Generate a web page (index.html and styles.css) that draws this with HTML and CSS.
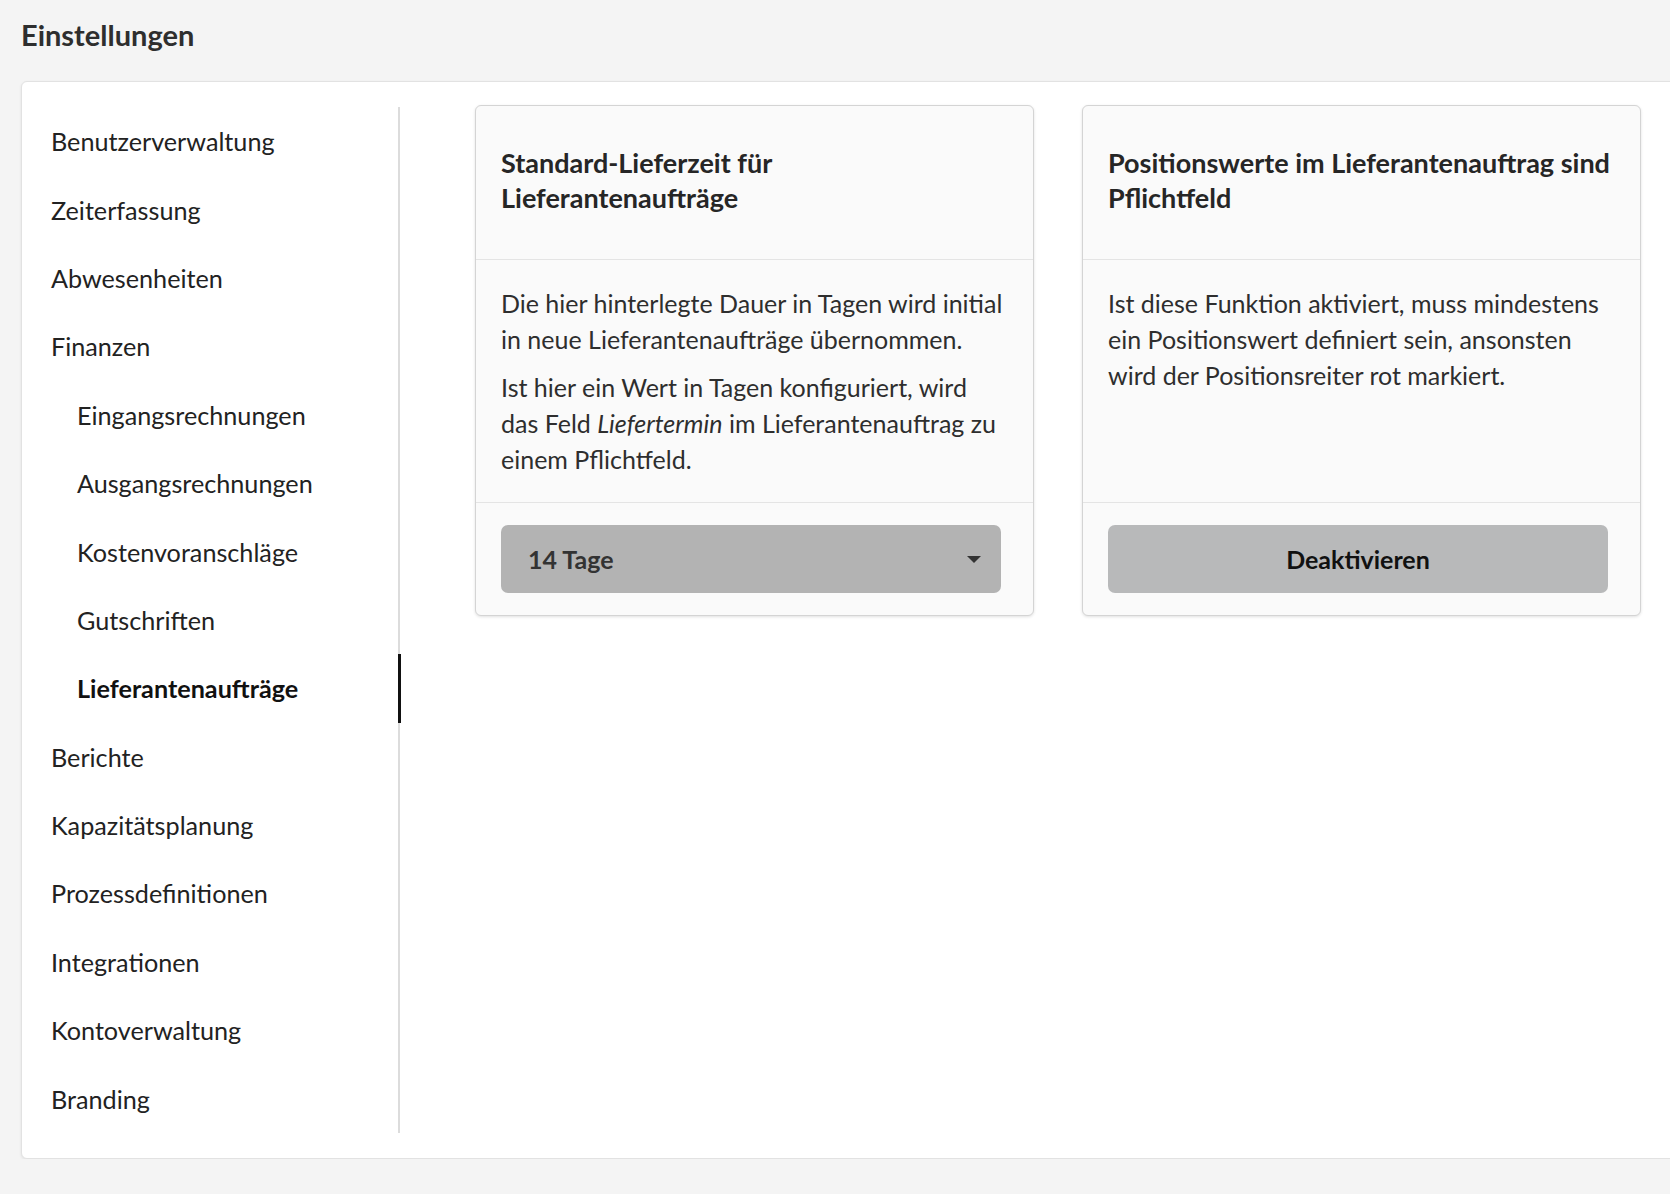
FILE: index.html
```html
<!DOCTYPE html>
<html lang="de">
<head>
  <meta charset="UTF-8">
  <meta name="viewport" content="width=device-width, initial-scale=1.0">
  <title>Einstellungen</title>
  <link rel="stylesheet" href="styles.css">
</head>
<body>
  <h1 class="page-title">Einstellungen</h1>

  <div class="panel">
    <nav class="side-nav">
      <a class="nav-item">Benutzerverwaltung</a>
      <a class="nav-item">Zeiterfassung</a>
      <a class="nav-item">Abwesenheiten</a>
      <a class="nav-item">Finanzen</a>
      <a class="nav-item sub">Eingangsrechnungen</a>
      <a class="nav-item sub">Ausgangsrechnungen</a>
      <a class="nav-item sub">Kostenvoranschläge</a>
      <a class="nav-item sub">Gutschriften</a>
      <a class="nav-item sub active">Lieferantenaufträge</a>
      <a class="nav-item">Berichte</a>
      <a class="nav-item">Kapazitätsplanung</a>
      <a class="nav-item">Prozessdefinitionen</a>
      <a class="nav-item">Integrationen</a>
      <a class="nav-item">Kontoverwaltung</a>
      <a class="nav-item">Branding</a>
    </nav>

    <div class="content">
      <div class="cards">
        <div class="card">
          <div class="card-header">
            <h2>Standard-Lieferzeit für Lieferantenaufträge</h2>
          </div>
          <div class="card-body">
            <p>Die hier hinterlegte Dauer in Tagen wird initial in neue Lieferantenaufträge übernommen.</p>
            <p>Ist hier ein Wert in Tagen konfiguriert, wird das Feld <em>Liefertermin</em> im Lieferantenauftrag zu einem Pflichtfeld.</p>
          </div>
          <div class="card-footer">
            <div class="select">
              <span>14 Tage</span>
              <span class="caret"></span>
            </div>
          </div>
        </div>

        <div class="card">
          <div class="card-header">
            <h2>Positionswerte im Lieferantenauftrag sind Pflichtfeld</h2>
          </div>
          <div class="card-body">
            <p>Ist diese Funktion aktiviert, muss mindestens ein Positionswert definiert sein, ansonsten wird der Positionsreiter rot markiert.</p>
          </div>
          <div class="card-footer">
            <button class="btn">Deaktivieren</button>
          </div>
        </div>
      </div>
    </div>
  </div>
</body>
</html>
```

FILE: styles.css
```css
body {
  margin: 0;
  font-family: Lato, 'Open Sans', sans-serif;
  background-color: #f4f4f4;
  color: #2b2b2b;
  overflow: hidden;
}

.page-title {
  margin: 0;
  padding: 17px 21px 0;
  font-size: 29px;
  line-height: 36px;
  font-weight: 700;
  color: #2e2e2e;
}

.panel {
  display: flex;
  align-items: flex-start;
  margin: 28px -20px 0 21px;
  padding: 25px 0 25px 0;
  background-color: #fff;
  border: 1px solid #e2e2e2;
  border-radius: 6px;
  box-shadow: 0 1px 3px rgba(0, 0, 0, 0.08);
}

.side-nav {
  display: flex;
  flex-direction: column;
  width: 376px;
  flex-shrink: 0;
  border-right: 2px solid #dcdcdc;
}

.nav-item {
  position: relative;
  display: flex;
  align-items: center;
  height: 68.4px;
  padding-left: 29px;
  font-size: 25.2px;
  color: #222;
}

.nav-item.sub {
  padding-left: 55px;
}

.nav-item.active {
  font-weight: 700;
  color: #111;
}

.nav-item.active::after {
  content: "";
  position: absolute;
  top: 0;
  bottom: 0;
  right: -3px;
  width: 3px;
  background-color: #111;
}

.content {
  padding-left: 75px;
  margin-top: -2px;
}

.cards {
  display: flex;
  gap: 48px;
}

.card {
  display: flex;
  flex-direction: column;
  width: 559px;
  box-sizing: border-box;
  background-color: #fafafa;
  border: 1px solid #d4d4d4;
  border-radius: 6px;
  box-shadow: 0 1px 3px rgba(0, 0, 0, 0.12);
}

.card-header {
  padding: 39px 26px 44px 25px;
  border-bottom: 1px solid #e4e4e4;
}

.card-header h2 {
  margin: 0;
  font-size: 27px;
  line-height: 35px;
  font-weight: 700;
  color: #262626;
}

.card-body {
  flex: 1;
  padding: 25px 24px 25px 25px;
  border-bottom: 1px solid #e4e4e4;
}

.card-body p {
  margin: 0 0 12px;
  font-size: 25px;
  line-height: 36px;
  color: #2e2e2e;
}

.card-body p:last-child {
  margin-bottom: 0;
}

.card-footer {
  padding: 22px 32px 22px 25px;
}

.select, .btn {
  display: flex;
  align-items: center;
  width: 100%;
  height: 68px;
  box-sizing: border-box;
  border: none;
  border-radius: 7px;
  font-family: inherit;
  font-size: 25px;
  font-weight: 700;
}

.select {
  justify-content: space-between;
  padding: 0 20px 0 27px;
  background-color: #b3b3b3;
  color: #333;
}

.caret {
  width: 0;
  height: 0;
  border-left: 7px solid transparent;
  border-right: 7px solid transparent;
  border-top: 7px solid #333;
}

.btn {
  justify-content: center;
  background-color: #b8b9ba;
  color: #111;
}
```
